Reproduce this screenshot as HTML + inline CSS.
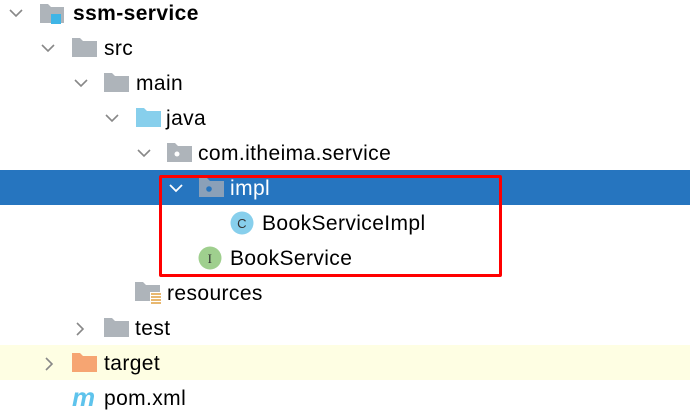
<!DOCTYPE html>
<html><head><meta charset="utf-8"><style>
body{margin:0;width:690px;height:417px;background:#fff;position:relative;overflow:hidden;font-family:"Liberation Sans","Noto Sans CJK SC",sans-serif;font-size:21px;letter-spacing:0.4px;color:#000}
.r{position:absolute;left:0;width:690px;height:35px}
.t{position:absolute;top:5px;line-height:24px;white-space:nowrap;margin-top:1px}
svg{position:absolute}
</style></head><body>
<div class="r" style="top:170px;background:#2675bf"></div>
<div class="r" style="top:345px;background:#fefee3"></div>

<svg style="left:8px;top:6px" width="16" height="14"><path d="M2 4l6 6 6-6" fill="none" stroke="#888" stroke-width="1.6"/></svg>
<svg style="left:40px;top:2px" width="28" height="24"><path d="M0 2h8l3 3h13v16H0z" fill="#aeb4ba"/><rect x="11" y="12" width="10" height="10" fill="#3fb5e6"/></svg>
<div class="t" style="left:73px;top:1px;font-weight:bold">ssm-service</div>

<svg style="left:40px;top:41px" width="16" height="14"><path d="M2 4l6 6 6-6" fill="none" stroke="#888" stroke-width="1.6"/></svg>
<svg style="left:72px;top:38px" width="26" height="20"><path d="M0 0h8l3 3h14v16H0z" fill="#aeb4ba"/></svg>
<div class="t" style="left:104px;top:36px">src</div>

<svg style="left:73px;top:76px" width="16" height="14"><path d="M2 4l6 6 6-6" fill="none" stroke="#888" stroke-width="1.6"/></svg>
<svg style="left:104px;top:73px" width="26" height="20"><path d="M0 0h8l3 3h14v16H0z" fill="#aeb4ba"/></svg>
<div class="t" style="left:136px;top:71px">main</div>

<svg style="left:104px;top:111px" width="16" height="14"><path d="M2 4l6 6 6-6" fill="none" stroke="#888" stroke-width="1.6"/></svg>
<svg style="left:136px;top:108px" width="26" height="20"><path d="M0 0h8l3 3h14v16H0z" fill="#87cfec"/></svg>
<div class="t" style="left:166px;top:106px">java</div>

<svg style="left:136px;top:146px" width="16" height="14"><path d="M2 4l6 6 6-6" fill="none" stroke="#888" stroke-width="1.6"/></svg>
<svg style="left:167px;top:143px" width="26" height="20"><path d="M0 0h8l3 3h14v16H0z" fill="#aeb4ba"/><circle cx="10" cy="11" r="2.5" fill="#fff"/></svg>
<div class="t" style="left:198px;top:141px">com.itheima.service</div>

<svg style="left:168px;top:181px" width="16" height="14"><path d="M2 4l6 6 6-6" fill="none" stroke="#fff" stroke-width="1.8"/></svg>
<svg style="left:199px;top:178px" width="26" height="20"><path d="M0 0h8l3 3h14v16H0z" fill="#8aa0b8"/><circle cx="10" cy="11" r="2.8" fill="#2675bf"/></svg>
<div class="t" style="left:230px;top:176px;color:#fff">impl</div>

<svg style="left:230px;top:211px" width="24" height="24"><circle cx="12" cy="12" r="11.5" fill="#87cfec"/><text x="12" y="17" font-size="13" text-anchor="middle" fill="#333" font-family="Liberation Sans">C</text></svg>
<div class="t" style="left:262px;top:211px">BookServiceImpl</div>

<svg style="left:198px;top:246px" width="24" height="24"><circle cx="12" cy="12" r="11.5" fill="#9fcf8e"/><text x="12" y="17" font-size="13" text-anchor="middle" fill="#333" font-family="Liberation Serif">I</text></svg>
<div class="t" style="left:230px;top:246px">BookService</div>

<svg style="left:135px;top:282px" width="28" height="24"><path d="M0 0h8l3 3h14v16H0z" fill="#aeb4ba"/><rect x="15" y="10" width="11" height="13" fill="#fff"/><g stroke="#e0a040" stroke-width="1.5"><path d="M16 12h10M16 15h10M16 18h10M16 21h10"/></g></svg>
<div class="t" style="left:167px;top:281px">resources</div>

<svg style="left:73px;top:321px" width="14" height="16"><path d="M4 2l6 6-6 6" fill="none" stroke="#888" stroke-width="1.6"/></svg>
<svg style="left:104px;top:318px" width="26" height="20"><path d="M0 0h8l3 3h14v16H0z" fill="#aeb4ba"/></svg>
<div class="t" style="left:135px;top:316px">test</div>

<svg style="left:42px;top:356px" width="14" height="16"><path d="M4 2l6 6-6 6" fill="none" stroke="#888" stroke-width="1.6"/></svg>
<svg style="left:72px;top:353px" width="26" height="20"><path d="M0 0h8l3 3h14v16H0z" fill="#f6a572"/></svg>
<div class="t" style="left:104px;top:351px">target</div>

<div class="t" style="left:72px;top:384px;color:#5ec3ec;font-weight:bold;font-style:italic;font-size:26px">m</div>
<div class="t" style="left:104px;top:386px">pom.xml</div>

<div style="position:absolute;left:159px;top:175px;width:337px;height:96px;border:3px solid #f00;border-radius:2px"></div>
</body></html>
